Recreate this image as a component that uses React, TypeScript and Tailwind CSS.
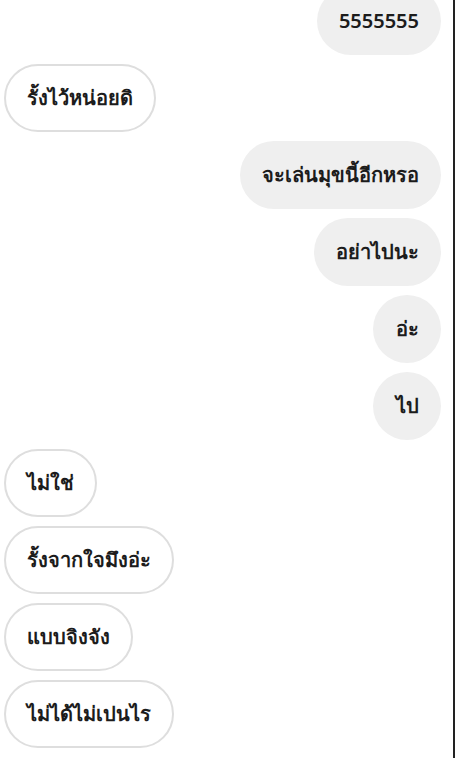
const messages: { text: string; mine: boolean }[] = [
  { text: "5555555", mine: true },
  { text: "รั้งไว้หน่อยดิ", mine: false },
  { text: "จะเล่นมุขนี้อีกหรอ", mine: true },
  { text: "อย่าไปนะ", mine: true },
  { text: "อ่ะ", mine: true },
  { text: "ไป", mine: true },
  { text: "ไม่ใช่", mine: false },
  { text: "รั้งจากใจมึงอ่ะ", mine: false },
  { text: "แบบจิงจัง", mine: false },
  { text: "ไม่ได้ไม่เปนไร", mine: false },
];

function Bubble({ text, mine }: { text: string; mine: boolean }) {
  return (
    <div className={mine ? "flex justify-end" : "flex justify-start"}>
      <div
        className={
          mine
            ? "h-[68px] min-w-[68px] rounded-full bg-[#efefef] px-[22px] flex items-center justify-center"
            : "h-[68px] min-w-[68px] rounded-full border-2 border-[#dedede] bg-white px-[21px] flex items-center justify-center"
        }
      >
        <span className="text-[20px] leading-7 font-semibold text-[#1c1c1c] whitespace-nowrap">
          {text}
        </span>
      </div>
    </div>
  );
}

export default function App() {
  return (
    <div
      className="h-[758px] w-[455px] overflow-hidden bg-white flex"
      style={{ fontFamily: '"Noto Sans", sans-serif' }}
    >
      <div className="flex-1 border-r-2 border-[#222] flex flex-col justify-end gap-[9px] pl-1 pr-3 pb-[10px]">
        {messages.map((m, i) => (
          <Bubble key={i} text={m.text} mine={m.mine} />
        ))}
      </div>
    </div>
  );
}
